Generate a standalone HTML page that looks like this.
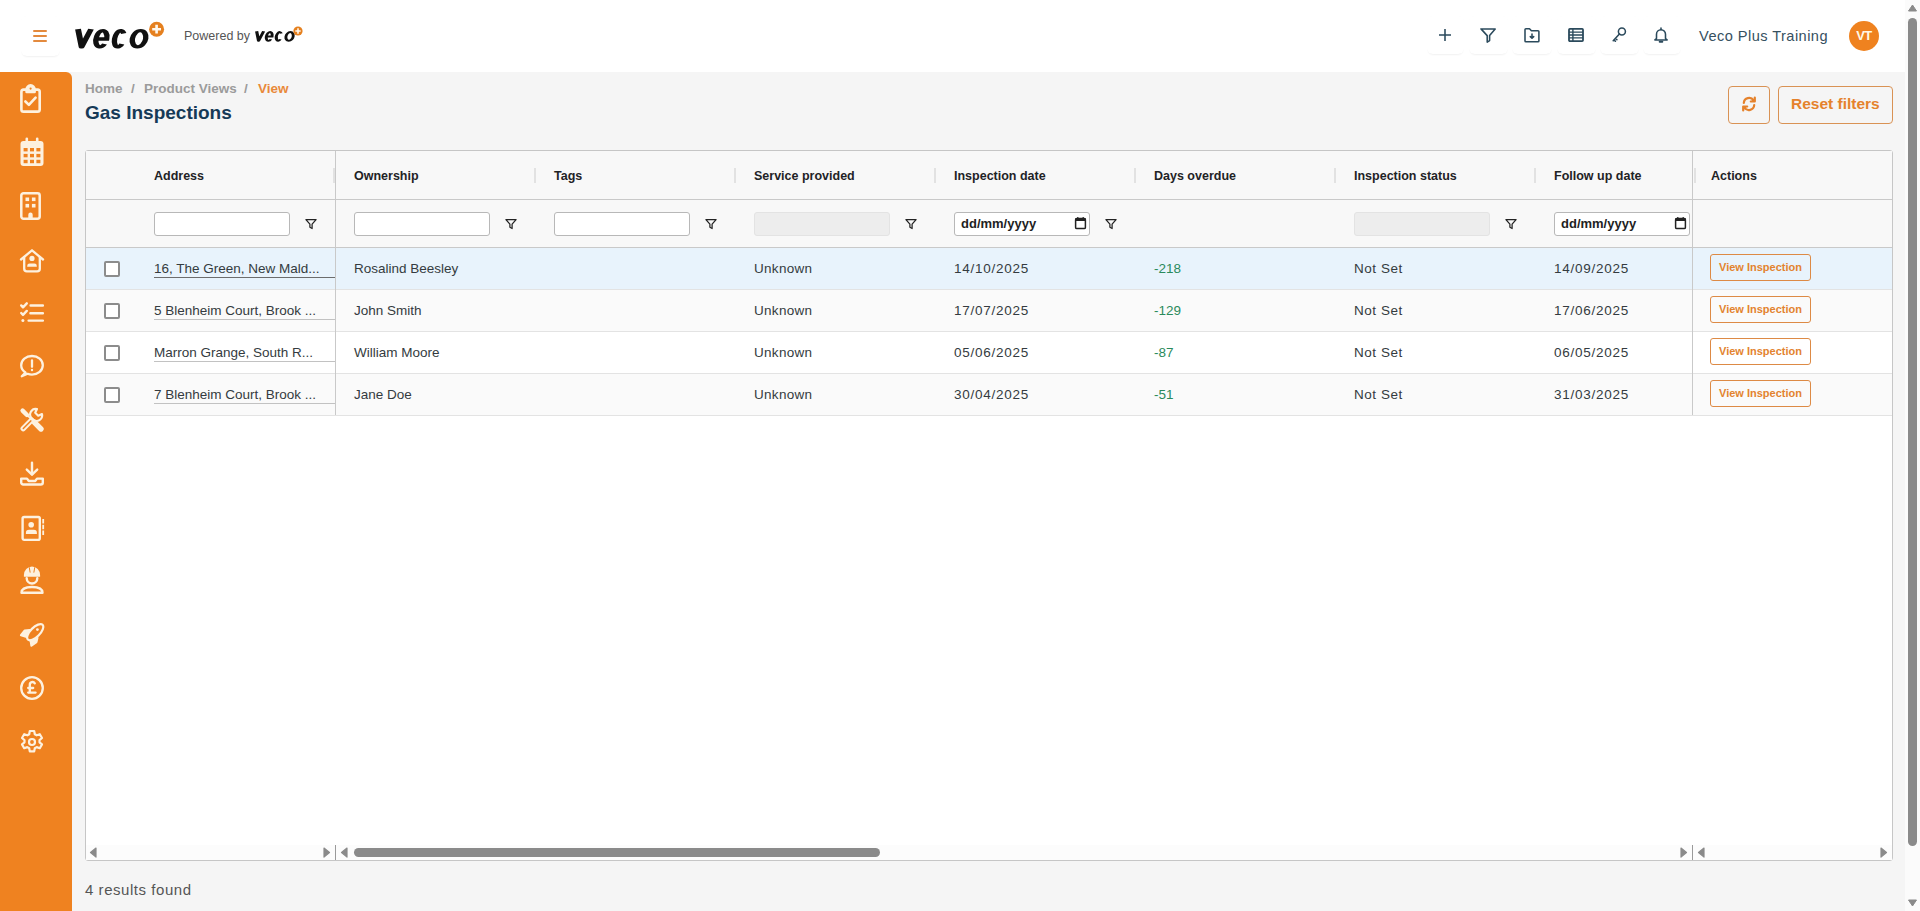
<!DOCTYPE html>
<html><head><meta charset="utf-8">
<style>
*{box-sizing:border-box;margin:0;padding:0}
html,body{width:1920px;height:911px;overflow:hidden;background:#f5f5f5;font-family:"Liberation Sans",sans-serif;color:#333}
.abs{position:absolute}
#hdr{position:absolute;left:0;top:0;width:1905px;height:72px;background:#fff}
#side{position:absolute;left:0;top:72px;width:72px;height:839px;background:#ef8220;border-top-right-radius:6px}
#vscroll{position:absolute;left:1905px;top:0;width:15px;height:911px;background:#fbfbfb}
.hbtn{position:absolute;top:16px;height:38px;border-radius:6px;box-shadow:0 2px 2px -1px rgba(0,0,0,0.06),0 0 1px rgba(0,0,0,0.02)}
.logo{font-weight:bold;font-style:italic;color:#111;letter-spacing:-1px;white-space:nowrap}
#tbl{position:absolute;left:85px;top:150px;width:1808px;height:711px;border:1px solid #c6c6c6;border-radius:3px;background:#fff}
.lbl{position:absolute;top:169px;font-size:12.5px;font-weight:bold;color:#1f2326;white-space:nowrap}
.inp{position:absolute;top:212px;width:136px;height:24px;background:#fff;border:1px solid #b8b8b8;border-radius:3px}
.inp.dis{background:#ededed;border-color:#e3e3e3}
.dtxt{font-size:13px;font-weight:bold;color:#222;white-space:nowrap}
.cell{position:absolute;font-size:13.5px;color:#343b40;white-space:nowrap}
.green{color:#2a8a5c}
.cb{position:absolute;left:104px;width:16px;height:16px;border:2px solid #8c8c8c;border-radius:2px;background:#fff}
.vib{position:absolute;left:1710px;width:101px;height:27px;border:1px solid #dd8a45;border-radius:3px;background:transparent;color:#e3832f;font-size:11px;font-weight:bold;text-align:center;line-height:25px;white-space:nowrap}
.obtn{position:absolute;top:86px;height:38px;border:1px solid #d99254;border-radius:4px}
</style></head><body>
<div id="hdr">
<div class="abs" style="left:21px;top:16px;width:39px;height:40px;border-radius:6px;box-shadow:0 2px 2px -1px rgba(0,0,0,0.06),0 0 1px rgba(0,0,0,0.02)"></div>
<div class="abs" style="left:33px;top:30px;width:14px;height:1.7px;background:#e38a3e;border-radius:1px"></div>
<div class="abs" style="left:33px;top:35px;width:14px;height:1.7px;background:#e38a3e;border-radius:1px"></div>
<div class="abs" style="left:33px;top:40px;width:14px;height:1.7px;background:#e38a3e;border-radius:1px"></div>
<svg class="abs" style="left:0;top:0" width="320" height="72"><g transform="translate(0 0) translate(75 48.6) scale(1.0) translate(-75 -48.6)"><g fill="none" stroke="#111" stroke-width="3.3" transform="translate(0 48.6) skewX(-10) scale(1.62 1)"><path d="M46.05 -19.400000000000002 L50.19 -1.8499999999999999 L54.07 -19.400000000000002" stroke-linejoin="round" stroke-width="3.6"/><path d="M57.36 -9.60 H64.80 A3.32 8.15 0 1 0 64.02 -4.56" stroke-width="3.3"/><path d="M74.72 -15.04 A2.86 8.15 0 1 0 74.72 -4.56"/><ellipse cx="84.75" cy="-9.8" rx="4.12" ry="8.15"/></g></g><g transform="translate(180 -6.9) translate(75 48.6) scale(0.54) translate(-75 -48.6)"><g fill="none" stroke="#111" stroke-width="3.3" transform="translate(0 48.6) skewX(-10) scale(1.62 1)"><path d="M46.05 -19.400000000000002 L50.19 -1.8499999999999999 L54.07 -19.400000000000002" stroke-linejoin="round" stroke-width="3.6"/><path d="M57.36 -9.60 H64.80 A3.32 8.15 0 1 0 64.02 -4.56" stroke-width="3.3"/><path d="M74.72 -15.04 A2.86 8.15 0 1 0 74.72 -4.56"/><ellipse cx="84.75" cy="-9.8" rx="4.12" ry="8.15"/></g></g></svg>
<svg class="abs" style="left:149px;top:21px" width="16" height="16" viewBox="0 0 16 16"><circle cx="7.6" cy="8.2" r="7.5" fill="#e5801f"/><path d="M7.6 3.8v8.8M3.2 8.2h8.8" stroke="#fff8ee" stroke-width="2.6"/></svg>
<div class="abs" style="left:184px;top:29px;font-size:12.5px;color:#555">Powered by</div>
<svg class="abs" style="left:293px;top:26px" width="10" height="10" viewBox="0 0 10 10"><circle cx="5" cy="5" r="4.6" fill="#e5801f"/><path d="M5 2.3v5.4M2.3 5h5.4" stroke="#fff8ee" stroke-width="1.6"/></svg>
<div class="hbtn" style="left:1427px;width:37px"></div>
<div class="hbtn" style="left:1469px;width:39px"></div>
<div class="hbtn" style="left:1512px;width:40px"></div>
<div class="hbtn" style="left:1557px;width:39px"></div>
<div class="hbtn" style="left:1600px;width:39px"></div>
<div class="hbtn" style="left:1643px;width:38px"></div>
<svg class="abs" style="left:1437px;top:27px" width="16" height="16" viewBox="0 0 16 16" fill="none" stroke="#2b4a5c" stroke-width="1.55" stroke-linecap="round" stroke-linejoin="round"><path d="M8 2v12M2 8h12" stroke-linecap="butt"/></svg>
<svg class="abs" style="left:1480px;top:27px" width="16" height="16" viewBox="0 0 16 16" fill="none" stroke="#2b4a5c" stroke-width="1.55" stroke-linecap="round" stroke-linejoin="round"><path d="M1 1.9h14.2L9.6 8.6v4.9l-2.4 1.6V8.6z"/></svg>
<svg class="abs" style="left:1524px;top:27px" width="16" height="16" viewBox="0 0 16 16" fill="none" stroke="#2b4a5c" stroke-width="1.55" stroke-linecap="round" stroke-linejoin="round"><path d="M1 2.6a.9.9 0 0 1 .9-.9h3.6l1.9 2h6.6a.9.9 0 0 1 .9.9v9.3a.9.9 0 0 1-.9.9H1.9a.9.9 0 0 1-.9-.9z"/><path d="M8 6.9v4.2M6.3 9.6L8 11.3l1.7-1.7"/></svg>
<svg class="abs" style="left:1568px;top:27px" width="16" height="16" viewBox="0 0 16 16" ><rect x="1" y="1.9" width="14" height="12.2" rx="0.9" fill="none" stroke="#2b4a5c" stroke-width="1.8"/><path d="M1 5.1h14M1 8h14M1 10.9h14M4.9 1.9v12.2" fill="none" stroke="#2b4a5c" stroke-width="1.4"/></svg>
<svg class="abs" style="left:1611px;top:27px" width="16" height="16" viewBox="0 0 16 16" fill="none" stroke="#2b4a5c" stroke-width="1.55" stroke-linecap="round" stroke-linejoin="round"><circle cx="10.9" cy="4.4" r="3.5"/><path d="M8.4 6.9L2.2 13.7M4.4 11.2l1.5 1.4M2.9 12.9l1.5 1.4"/></svg>
<svg class="abs" style="left:1653px;top:27px" width="16" height="16" viewBox="0 0 16 16" fill="none" stroke="#2b4a5c" stroke-width="1.55" stroke-linecap="round" stroke-linejoin="round"><path d="M3.5 11.5V7.2a4.5 4.5 0 0 1 9 0v4.3l1.6 1.4H1.9z"/><path d="M8 .9v1.7"/><path d="M6.7 14.8h2.6" stroke-width="2"/></svg>
<div class="abs" style="left:1699px;top:27.5px;font-size:14.6px;letter-spacing:0.45px;color:#36505f;white-space:nowrap">Veco Plus Training</div>
<div class="abs" style="left:1849px;top:21px;width:30px;height:30px;border-radius:50%;background:#ef821f;color:#fff8e6;font-weight:bold;font-size:13px;line-height:30px;text-align:center;letter-spacing:-0.6px">VT</div>
</div>
<div id="side"></div>
<svg class="abs" style="left:18px;top:83px" width="26" height="32" viewBox="0 0 26 32" fill="none" stroke="#fdf1df" stroke-width="2.6" stroke-linecap="round" stroke-linejoin="round">
<path d="M8.4 6.6H5.6a2.2 2.2 0 0 0-2.2 2.2v17.6a2.2 2.2 0 0 0 2.2 2.2h13.9a2.2 2.2 0 0 0 2.2-2.2V8.8a2.2 2.2 0 0 0-2.2-2.2H16.7"/>
<path d="M8.6 9h8V6.4a4 4 0 0 0-8 0z" fill="#fdf1df"/>
<circle cx="12.6" cy="5.6" r="1.1" fill="#ef8220" stroke="none"/>
<path d="M7.4 18.5l3.5 3.4 6.7-7.2"/></svg>
<svg class="abs" style="left:20px;top:137px" width="24" height="30" viewBox="0 0 24 30"><rect x="0.5" y="4" width="23" height="25" rx="3" fill="#fdf1df"/><rect x="5.5" y="0.5" width="2.6" height="6" rx="1.3" fill="#fdf1df"/><rect x="15.9" y="0.5" width="2.6" height="6" rx="1.3" fill="#fdf1df"/><rect x="3.6" y="11.0" width="4" height="3.4" fill="#ef8220"/><rect x="10.0" y="11.0" width="4" height="3.4" fill="#ef8220"/><rect x="16.4" y="11.0" width="4" height="3.4" fill="#ef8220"/><rect x="3.6" y="16.9" width="4" height="3.4" fill="#ef8220"/><rect x="10.0" y="16.9" width="4" height="3.4" fill="#ef8220"/><rect x="16.4" y="16.9" width="4" height="3.4" fill="#ef8220"/><rect x="3.6" y="22.8" width="4" height="3.4" fill="#ef8220"/><rect x="10.0" y="22.8" width="4" height="3.4" fill="#ef8220"/><rect x="16.4" y="22.8" width="4" height="3.4" fill="#ef8220"/></svg>
<svg class="abs" style="left:19px;top:191px" width="24" height="30" viewBox="0 0 24 30" fill="none" stroke="#fdf1df" stroke-width="2.5">
<rect x="2.3" y="2.3" width="18.4" height="25.4" rx="2.2"/>
<rect x="6.5" y="6.5" width="3.6" height="3.6" fill="#fdf1df" stroke="none"/><rect x="12.9" y="6.5" width="3.6" height="3.6" fill="#fdf1df" stroke="none"/>
<rect x="6.5" y="12.9" width="3.6" height="3.6" fill="#fdf1df" stroke="none"/><rect x="12.9" y="12.9" width="3.6" height="3.6" fill="#fdf1df" stroke="none"/>
<path d="M9.3 28v-4.2a2.2 2.2 0 0 1 4.4 0V28" fill="#fdf1df" stroke="none"/></svg>
<svg class="abs" style="left:19px;top:248px" width="26" height="26" viewBox="0 0 26 26" fill="none" stroke="#fdf1df" stroke-width="2.3" stroke-linecap="round" stroke-linejoin="round">
<path d="M2 11.5L13 2.3l11 9.2"/><path d="M5.2 9.2v11.6a2.6 2.6 0 0 0 2.6 2.6h10.4a2.6 2.6 0 0 0 2.6-2.6V9.2"/>
<circle cx="13" cy="10.4" r="2.6" fill="#fdf1df" stroke="none"/><path d="M8.2 18.8v-.9a2.4 2.4 0 0 1 2.4-2.4h4.8a2.4 2.4 0 0 1 2.4 2.4v.9z" fill="#fdf1df" stroke="none"/></svg>
<svg class="abs" style="left:19px;top:300px" width="26" height="24" viewBox="0 0 26 24" fill="none" stroke="#fdf1df" stroke-width="2.4" stroke-linecap="round" stroke-linejoin="round">
<path d="M2.2 5.4l1.8 1.9 3.8-4"/><path d="M2.2 13l1.8 1.9 3.8-4"/><circle cx="3.9" cy="20.6" r="1.5" fill="#fdf1df" stroke="none"/>
<path d="M11.6 5.5h12.3M11.4 13.2h12.5M9.6 20.6h14.3"/></svg>
<svg class="abs" style="left:19px;top:353.2px" width="26" height="26" viewBox="0 0 26 26" fill="none" stroke="#fdf1df" stroke-width="2.3" stroke-linecap="round" stroke-linejoin="round">
<path d="M6.5 19.5C3.8 17.8 2.2 15.3 2.2 12.3c0-5.3 4.8-9.3 10.8-9.3s10.8 4 10.8 9.3-4.8 9.3-10.8 9.3c-1.6 0-3.1-.3-4.4-.8L2.8 23.2z"/>
<path d="M13 7.5v6.3"/><circle cx="13" cy="17" r="1.2" fill="#fdf1df" stroke="none"/></svg>
<svg class="abs" style="left:19px;top:407px" width="26" height="26" viewBox="0 0 26 26" fill="none" stroke="#fdf1df" stroke-linecap="round" stroke-linejoin="round">
<path d="M4.2 21.6L12.6 13.2" stroke-width="5.4"/><path d="M4.3 21.5L12.3 13.5" stroke="#ef8220" stroke-width="1.5"/>
<path transform="translate(1.4 -0.4)" d="M11.2 11.6A5.6 5.6 0 0 1 16.6 2.4L14.8 6.2 17.8 9.2 21.6 7.4A5.6 5.6 0 0 1 12.6 13" stroke-width="2.1"/>
<path d="M3.6 3.6L8 8" stroke-width="4.4"/><path d="M9 9L14.4 14.4" stroke-width="1.6"/><path d="M15.4 15.4L22 22" stroke-width="5.4"/>
</svg>
<svg class="abs" style="left:19px;top:460px" width="26" height="27" viewBox="0 0 26 27" fill="none" stroke="#fdf1df" stroke-width="2.4" stroke-linecap="round" stroke-linejoin="round">
<path d="M13 2.8v11.4"/><path d="M7.8 9.6l5.2 5 5.2-5"/>
<path d="M2.2 18.6h5.8l1.8 2.4h6.4l1.8-2.4h5.8v3.9a2 2 0 0 1-2 2H4.2a2 2 0 0 1-2-2z"/></svg>
<svg class="abs" style="left:20px;top:514px" width="26" height="28" viewBox="0 0 26 28" fill="none" stroke="#fdf1df" stroke-width="2.4" stroke-linecap="round" stroke-linejoin="round">
<rect x="2.6" y="3" width="17.2" height="22.9" rx="1.6"/><path d="M23.2 4.9v4.6M23.2 10.7v4.6M23.2 16.5v4.6" stroke-width="1.8" stroke-linecap="butt"/>
<circle cx="11.2" cy="10.8" r="2.8" fill="#fdf1df" stroke="none"/><path d="M5.9 20.1v-1a3.2 3.2 0 0 1 3.2-3.3h4.6a3.2 3.2 0 0 1 3.2 3.3v1z" fill="#fdf1df" stroke="none"/></svg>
<svg class="abs" style="left:19px;top:565px" width="26" height="32" viewBox="0 0 26 32" fill="none" stroke="#fdf1df" stroke-width="2.4" stroke-linecap="round" stroke-linejoin="round">
<path d="M4.9 11.7v-1.6a8.1 8.6 0 0 1 16.2 0v1.6z" fill="#fdf1df" stroke="none"/><path d="M10.3 2.6l.8 4.6M15.7 2.6l-.8 4.6" stroke="#ef8220" stroke-width="1"/>
<path d="M7.7 13.2a5.3 5.3 0 0 0 10.6 0"/><path d="M2.5 27.8c0-3.8 2.6-5.8 10.5-5.8s10.5 2 10.5 5.8z"/></svg>
<svg class="abs" style="left:19px;top:622px" width="26" height="26" viewBox="0 0 26 26" fill="none" stroke="#fdf1df" stroke-width="2.2" stroke-linecap="round" stroke-linejoin="round">
<path d="M2 13.2L5.6 8.6 10.6 8 8.6 15.2z" fill="#fdf1df"/><path d="M12.4 23.6L11.6 18.2 18.4 15.8 17.4 20z" fill="#fdf1df"/>
<ellipse cx="16.2" cy="10.2" rx="10.4" ry="4.7" transform="rotate(-45 16.2 10.2)" fill="#ef8220"/>
<circle cx="18.4" cy="7.6" r="1.4" fill="#fdf1df" stroke="none"/></svg>
<svg class="abs" style="left:19px;top:675px" width="26" height="26" viewBox="0 0 26 26" fill="none" stroke="#fdf1df" stroke-width="2.3" stroke-linecap="round" stroke-linejoin="round">
<circle cx="13" cy="13" r="10.8"/><path d="M15.8 8.3a2.7 2.7 0 0 0-5 1.4V17.6H9.2M16.6 17.6H10.8M9.2 13h5"/></svg>
<svg class="abs" style="left:19px;top:729px" width="26" height="26" viewBox="0 0 26 26" fill="none" stroke="#fdf1df" stroke-width="2.2" stroke-linejoin="round">
<path d="M10.8 2h4.4l.6 3.2 1.9 1.1 3.1-1.1 2.2 3.8-2.5 2.1v2.2l2.5 2.1-2.2 3.8-3.1-1.1-1.9 1.1-.6 3.2h-4.4l-.6-3.2-1.9-1.1-3.1 1.1-2.2-3.8 2.5-2.1v-2.2L3 9l2.2-3.8 3.1 1.1 1.9-1.1z"/>
<circle cx="13" cy="13" r="3"/></svg>
<div class="abs" style="left:85px;top:81px;font-size:13.5px;font-weight:bold;color:#9b9b9b;white-space:nowrap">Home</div>
<div class="abs" style="left:131px;top:81px;font-size:13.5px;font-weight:bold;color:#9b9b9b">/</div>
<div class="abs" style="left:144px;top:81px;font-size:13.5px;font-weight:bold;color:#9b9b9b;white-space:nowrap">Product Views</div>
<div class="abs" style="left:244px;top:81px;font-size:13.5px;font-weight:bold;color:#9b9b9b">/</div>
<div class="abs" style="left:258px;top:81px;font-size:13.5px;font-weight:bold;color:#e9893a;white-space:nowrap">View</div>
<div class="abs" style="left:85px;top:102px;font-size:19px;font-weight:bold;color:#163a57;white-space:nowrap">Gas Inspections</div>
<div class="obtn" style="left:1728px;width:42px"></div>
<svg class="abs" style="left:1741px;top:96px" width="16" height="16" viewBox="0 0 16 16" fill="none" stroke="#e5822c" stroke-width="2.2" stroke-linecap="round"><path d="M2.8 7A5.3 5.3 0 0 1 12.6 4.5"/><path d="M13.2 9A5.3 5.3 0 0 1 3.4 11.5"/><path d="M13.8 1.5v4h-4" fill="#e5822c" stroke-linejoin="round"/><path d="M2.2 14.5v-4h4" fill="#e5822c" stroke-linejoin="round"/></svg>
<div class="obtn" style="left:1778px;width:115px"></div>
<div class="abs" style="left:1791px;top:95px;font-size:15.5px;font-weight:bold;color:#e5822c;white-space:nowrap">Reset filters</div>
<div id="tbl"></div>
<div class="abs" style="left:86px;top:151px;width:1806px;height:48px;background:#f8f8f8"></div>
<div class="abs" style="left:86px;top:199px;width:1806px;height:1px;background:#c9c9c9"></div>
<div class="abs" style="left:86px;top:200px;width:1806px;height:47px;background:#f8f8f8"></div>
<div class="abs" style="left:86px;top:247px;width:1806px;height:1px;background:#c9c9c9"></div>
<div class="lbl" style="left:154px">Address</div>
<div class="lbl" style="left:354px">Ownership</div>
<div class="lbl" style="left:554px">Tags</div>
<div class="lbl" style="left:754px">Service provided</div>
<div class="lbl" style="left:954px">Inspection date</div>
<div class="lbl" style="left:1154px">Days overdue</div>
<div class="lbl" style="left:1354px">Inspection status</div>
<div class="lbl" style="left:1554px">Follow up date</div>
<div class="lbl" style="left:1711px">Actions</div>
<div class="abs" style="left:534px;top:168px;width:2px;height:15px;background:#e2e2e2"></div>
<div class="abs" style="left:734px;top:168px;width:2px;height:15px;background:#e2e2e2"></div>
<div class="abs" style="left:934px;top:168px;width:2px;height:15px;background:#e2e2e2"></div>
<div class="abs" style="left:1134px;top:168px;width:2px;height:15px;background:#e2e2e2"></div>
<div class="abs" style="left:1334px;top:168px;width:2px;height:15px;background:#e2e2e2"></div>
<div class="abs" style="left:1534px;top:168px;width:2px;height:15px;background:#e2e2e2"></div>
<div class="abs" style="left:333px;top:168px;width:2px;height:15px;background:#e2e2e2"></div>
<div class="abs" style="left:1694px;top:168px;width:2px;height:15px;background:#e2e2e2"></div>
<div class="inp" style="left:154px"></div>
<div class="inp" style="left:354px"></div>
<div class="inp" style="left:554px"></div>
<div class="inp dis" style="left:754px"></div>
<div class="inp" style="left:954px;width:136px"></div>
<div class="abs dtxt" style="left:961px;top:216px">dd/mm/yyyy</div>
<svg class="abs" style="left:1074px;top:216px" width="13" height="14" viewBox="0 0 13 14"><rect x="1.6" y="2.6" width="9.8" height="10" rx="1.2" fill="none" stroke="#222" stroke-width="1.5"/><rect x="1.2" y="2" width="10.6" height="3" rx="1" fill="#222"/><path d="M3.8 .9v1.6M9.2 .9v1.6" stroke="#222" stroke-width="1.2"/></svg>
<div class="inp dis" style="left:1354px"></div>
<div class="inp" style="left:1554px;width:136px"></div>
<div class="abs dtxt" style="left:1561px;top:216px">dd/mm/yyyy</div>
<svg class="abs" style="left:1674px;top:216px" width="13" height="14" viewBox="0 0 13 14"><rect x="1.6" y="2.6" width="9.8" height="10" rx="1.2" fill="none" stroke="#222" stroke-width="1.5"/><rect x="1.2" y="2" width="10.6" height="3" rx="1" fill="#222"/><path d="M3.8 .9v1.6M9.2 .9v1.6" stroke="#222" stroke-width="1.2"/></svg>
<svg class="abs" style="left:305px;top:218px" width="12" height="12" viewBox="0 0 12 12" fill="none" stroke="#222" stroke-width="1.25" stroke-linejoin="round"><path d="M.9 1.6h10.2L7.1 6.2v4.3L4.9 9.3V6.2z"/></svg>
<svg class="abs" style="left:505px;top:218px" width="12" height="12" viewBox="0 0 12 12" fill="none" stroke="#222" stroke-width="1.25" stroke-linejoin="round"><path d="M.9 1.6h10.2L7.1 6.2v4.3L4.9 9.3V6.2z"/></svg>
<svg class="abs" style="left:705px;top:218px" width="12" height="12" viewBox="0 0 12 12" fill="none" stroke="#222" stroke-width="1.25" stroke-linejoin="round"><path d="M.9 1.6h10.2L7.1 6.2v4.3L4.9 9.3V6.2z"/></svg>
<svg class="abs" style="left:905px;top:218px" width="12" height="12" viewBox="0 0 12 12" fill="none" stroke="#222" stroke-width="1.25" stroke-linejoin="round"><path d="M.9 1.6h10.2L7.1 6.2v4.3L4.9 9.3V6.2z"/></svg>
<svg class="abs" style="left:1105px;top:218px" width="12" height="12" viewBox="0 0 12 12" fill="none" stroke="#222" stroke-width="1.25" stroke-linejoin="round"><path d="M.9 1.6h10.2L7.1 6.2v4.3L4.9 9.3V6.2z"/></svg>
<svg class="abs" style="left:1505px;top:218px" width="12" height="12" viewBox="0 0 12 12" fill="none" stroke="#222" stroke-width="1.25" stroke-linejoin="round"><path d="M.9 1.6h10.2L7.1 6.2v4.3L4.9 9.3V6.2z"/></svg>
<div class="abs" style="left:86px;top:248px;width:1806px;height:41px;background:#e8f3fc"></div>
<div class="abs" style="left:86px;top:289px;width:1806px;height:1px;background:#e3e3e3"></div>
<div class="cb" style="top:261px"></div>
<div class="cell" style="left:154px;top:261px">16, The Green, New Mald...</div>
<div class="abs" style="left:154px;top:277px;width:181px;height:1px;background:#6c6c6c"></div>
<div class="cell" style="left:354px;top:261px">Rosalind Beesley</div>
<div class="cell" style="left:754px;top:261px;letter-spacing:0.3px">Unknown</div>
<div class="cell" style="left:954px;top:261px;letter-spacing:0.75px">14/10/2025</div>
<div class="cell green" style="left:1154px;top:261px">-218</div>
<div class="cell" style="left:1354px;top:261px;letter-spacing:0.55px">Not Set</div>
<div class="cell" style="left:1554px;top:261px;letter-spacing:0.75px">14/09/2025</div>
<div class="vib" style="top:254px">View Inspection</div>
<div class="abs" style="left:86px;top:290px;width:1806px;height:41px;background:#fafafa"></div>
<div class="abs" style="left:86px;top:331px;width:1806px;height:1px;background:#e3e3e3"></div>
<div class="cb" style="top:303px"></div>
<div class="cell" style="left:154px;top:303px">5 Blenheim Court, Brook ...</div>
<div class="abs" style="left:154px;top:319px;width:181px;height:1px;background:#c2c2c2"></div>
<div class="cell" style="left:354px;top:303px">John Smith</div>
<div class="cell" style="left:754px;top:303px;letter-spacing:0.3px">Unknown</div>
<div class="cell" style="left:954px;top:303px;letter-spacing:0.75px">17/07/2025</div>
<div class="cell green" style="left:1154px;top:303px">-129</div>
<div class="cell" style="left:1354px;top:303px;letter-spacing:0.55px">Not Set</div>
<div class="cell" style="left:1554px;top:303px;letter-spacing:0.75px">17/06/2025</div>
<div class="vib" style="top:296px">View Inspection</div>
<div class="abs" style="left:86px;top:332px;width:1806px;height:41px;background:#ffffff"></div>
<div class="abs" style="left:86px;top:373px;width:1806px;height:1px;background:#e3e3e3"></div>
<div class="cb" style="top:345px"></div>
<div class="cell" style="left:154px;top:345px">Marron Grange, South R...</div>
<div class="abs" style="left:154px;top:361px;width:181px;height:1px;background:#c2c2c2"></div>
<div class="cell" style="left:354px;top:345px">William Moore</div>
<div class="cell" style="left:754px;top:345px;letter-spacing:0.3px">Unknown</div>
<div class="cell" style="left:954px;top:345px;letter-spacing:0.75px">05/06/2025</div>
<div class="cell green" style="left:1154px;top:345px">-87</div>
<div class="cell" style="left:1354px;top:345px;letter-spacing:0.55px">Not Set</div>
<div class="cell" style="left:1554px;top:345px;letter-spacing:0.75px">06/05/2025</div>
<div class="vib" style="top:338px">View Inspection</div>
<div class="abs" style="left:86px;top:374px;width:1806px;height:41px;background:#fafafa"></div>
<div class="abs" style="left:86px;top:415px;width:1806px;height:1px;background:#e3e3e3"></div>
<div class="cb" style="top:387px"></div>
<div class="cell" style="left:154px;top:387px">7 Blenheim Court, Brook ...</div>
<div class="abs" style="left:154px;top:403px;width:181px;height:1px;background:#c2c2c2"></div>
<div class="cell" style="left:354px;top:387px">Jane Doe</div>
<div class="cell" style="left:754px;top:387px;letter-spacing:0.3px">Unknown</div>
<div class="cell" style="left:954px;top:387px;letter-spacing:0.75px">30/04/2025</div>
<div class="cell green" style="left:1154px;top:387px">-51</div>
<div class="cell" style="left:1354px;top:387px;letter-spacing:0.55px">Not Set</div>
<div class="cell" style="left:1554px;top:387px;letter-spacing:0.75px">31/03/2025</div>
<div class="vib" style="top:380px">View Inspection</div>
<div class="abs" style="left:335px;top:151px;width:1px;height:264px;background:#c9c9c9"></div>
<div class="abs" style="left:1692px;top:151px;width:1px;height:264px;background:#c9c9c9"></div>
<div class="abs" style="left:86px;top:845px;width:1806px;height:15px;background:#fcfcfc"></div>
<div class="abs" style="left:335px;top:845px;width:1px;height:15px;background:#9a9a9a"></div>
<div class="abs" style="left:1692px;top:845px;width:1px;height:15px;background:#9a9a9a"></div>
<svg class="abs" style="left:89px;top:847px" width="8" height="11" viewBox="0 0 8 11"><path d="M7 1L1.5 5.5 7 10z" fill="#8a8a8a" stroke="#8a8a8a" stroke-width="1.2" stroke-linejoin="round"/></svg>
<svg class="abs" style="left:323px;top:847px" width="8" height="11" viewBox="0 0 8 11"><path d="M1 1l5.5 4.5L1 10z" fill="#8a8a8a" stroke="#8a8a8a" stroke-width="1.2" stroke-linejoin="round"/></svg>
<svg class="abs" style="left:340px;top:847px" width="8" height="11" viewBox="0 0 8 11"><path d="M7 1L1.5 5.5 7 10z" fill="#8a8a8a" stroke="#8a8a8a" stroke-width="1.2" stroke-linejoin="round"/></svg>
<svg class="abs" style="left:1680px;top:847px" width="8" height="11" viewBox="0 0 8 11"><path d="M1 1l5.5 4.5L1 10z" fill="#8a8a8a" stroke="#8a8a8a" stroke-width="1.2" stroke-linejoin="round"/></svg>
<svg class="abs" style="left:1697px;top:847px" width="8" height="11" viewBox="0 0 8 11"><path d="M7 1L1.5 5.5 7 10z" fill="#8a8a8a" stroke="#8a8a8a" stroke-width="1.2" stroke-linejoin="round"/></svg>
<svg class="abs" style="left:1880px;top:847px" width="8" height="11" viewBox="0 0 8 11"><path d="M1 1l5.5 4.5L1 10z" fill="#8a8a8a" stroke="#8a8a8a" stroke-width="1.2" stroke-linejoin="round"/></svg>
<div class="abs" style="left:354px;top:848px;width:526px;height:9px;border-radius:4.5px;background:#8a8a8a"></div>
<div class="abs" style="left:85px;top:881px;font-size:15px;letter-spacing:0.55px;color:#555;white-space:nowrap">4 results found</div>
<div id="vscroll"></div>
<svg class="abs" style="left:1907px;top:3px" width="11" height="9" viewBox="0 0 11 9"><path d="M1.5 8L5.5 2 9.5 8z" fill="#8a8a8a" stroke="#8a8a8a" stroke-linejoin="round"/></svg>
<div class="abs" style="left:1908px;top:18px;width:9px;height:828px;border-radius:4.5px;background:#8a8a8a"></div>
<svg class="abs" style="left:1907px;top:899px" width="11" height="9" viewBox="0 0 11 9"><path d="M1.5 1L5.5 7 9.5 1z" fill="#8a8a8a" stroke="#8a8a8a" stroke-linejoin="round"/></svg>
</body></html>
